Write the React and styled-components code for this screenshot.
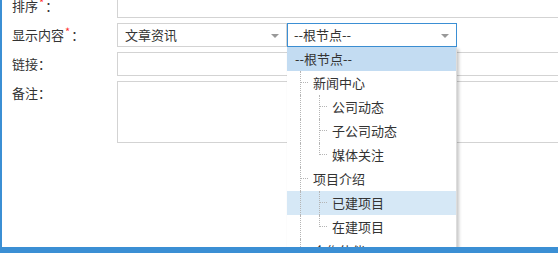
import React from "react";
import styled, { createGlobalStyle } from "styled-components";

const Global = createGlobalStyle`
  html, body { margin: 0; padding: 0; background: #fff; overflow: hidden; }
  body { font-family: "Noto Sans CJK SC", "Noto Sans", sans-serif; font-size: 13px; color: #333; }
  * { box-sizing: border-box; }
`;

const Dialog = styled.div`
  width: 600px;
  height: 253px;
  border-left: 2px solid #3b8fd4;
  border-bottom: 6px solid #3b8fd4;
  background: #fff;
  overflow: hidden;
  box-shadow: 0 3px 4px rgba(0, 0, 0, 0.12);
`;

const Form = styled.div`
  margin-top: -6px;
  display: grid;
  grid-template-columns: 115px 1fr;
  row-gap: 5px;
`;

const Label = styled.div`
  padding-left: 10px;
  height: 24px;
  line-height: 24px;
  color: #333;
  white-space: nowrap;
`;

const Star = styled.span`
  color: #f33;
  font-size: 11px;
  position: relative;
  top: -4px;
  margin: 0 1px;
`;

const TextInput = styled.div`
  height: ${(p) => (p.$tall ? "62px" : "24px")};
  border: 1px solid #d3d3d3;
  background: #fff;
`;

const SelectRow = styled.div`
  display: flex;
  height: 24px;
`;

const Combo = styled.div`
  position: relative;
  width: 170px;
  height: 24px;
  border: 1px solid ${(p) => (p.$active ? "#3b8fd4" : "#d3d3d3")};
  padding-left: ${(p) => (p.$active ? "6px" : "7px")};
  line-height: 22px;
  color: #333;
  background: #fff;
`;

const Arrow = styled.span`
  position: absolute;
  right: 7px;
  top: 10px;
  width: 0;
  height: 0;
  border-left: 4px solid transparent;
  border-right: 4px solid transparent;
  border-top: 4px solid #999;
`;

const Panel = styled.div`
  position: absolute;
  left: -1px;
  top: 23px;
  width: 170px;
  height: 240px;
  background: #fff;
  border-right: 1px solid #ddd;
  box-shadow: 2px 2px 3px rgba(0, 0, 0, 0.22);
  z-index: 5;
`;

const TreeRow = styled.div`
  position: relative;
  height: 24px;
  line-height: 24px;
  padding-left: ${(p) => (p.$level === 0 ? 8 : 26 + 19 * (p.$level - 1))}px;
  background: ${(p) => (p.$selected ? "#c3dcf2" : p.$hover ? "#d6e8f6" : "transparent")};
  color: #333;
  white-space: nowrap;
`;

const VLine = styled.span`
  position: absolute;
  left: ${(p) => p.$x}px;
  top: 0;
  height: ${(p) => (p.$half ? "12px" : "24px")};
  border-left: 1px dotted #b5b5b5;
`;

const HLine = styled.span`
  position: absolute;
  left: ${(p) => p.$x}px;
  top: 11px;
  width: 8px;
  border-top: 1px dotted #b5b5b5;
`;

const nodes = [
  { text: "--根节点--", level: 0, selected: true },
  { text: "新闻中心", level: 1, guides: [], last: false },
  { text: "公司动态", level: 2, guides: [13] },
  { text: "子公司动态", level: 2, guides: [13] },
  { text: "媒体关注", level: 2, guides: [13], last: true },
  { text: "项目介绍", level: 1, guides: [] },
  { text: "已建项目", level: 2, guides: [13], hover: true },
  { text: "在建项目", level: 2, guides: [13], last: true },
  { text: "合作伙伴", level: 1, guides: [] },
];

function Node({ n }) {
  const elbowX = 13 + 19 * (n.level - 1);
  return (
    <TreeRow $level={n.level} $selected={n.selected} $hover={n.hover}>
      {n.level > 0 && (
        <>
          {(n.guides || []).map((g) => (
            <VLine key={g} $x={g} />
          ))}
          <VLine $x={elbowX} $half={n.level === 2 && n.last} />
          <HLine $x={elbowX} />
        </>
      )}
      {n.text}
    </TreeRow>
  );
}

export default function App() {
  return (
    <>
      <Global />
      <Dialog>
        <Form>
          <Label>
            排序<Star>*</Star>：
          </Label>
          <TextInput />
          <Label>
            显示内容<Star>*</Star>：
          </Label>
          <SelectRow>
            <Combo>
              文章资讯
              <Arrow />
            </Combo>
            <Combo $active>
              --根节点--
              <Arrow />
              <Panel>
                {nodes.map((n, i) => (
                  <Node key={i} n={n} />
                ))}
              </Panel>
            </Combo>
          </SelectRow>
          <Label>链接：</Label>
          <TextInput />
          <Label>备注：</Label>
          <TextInput $tall />
        </Form>
      </Dialog>
    </>
  );
}
